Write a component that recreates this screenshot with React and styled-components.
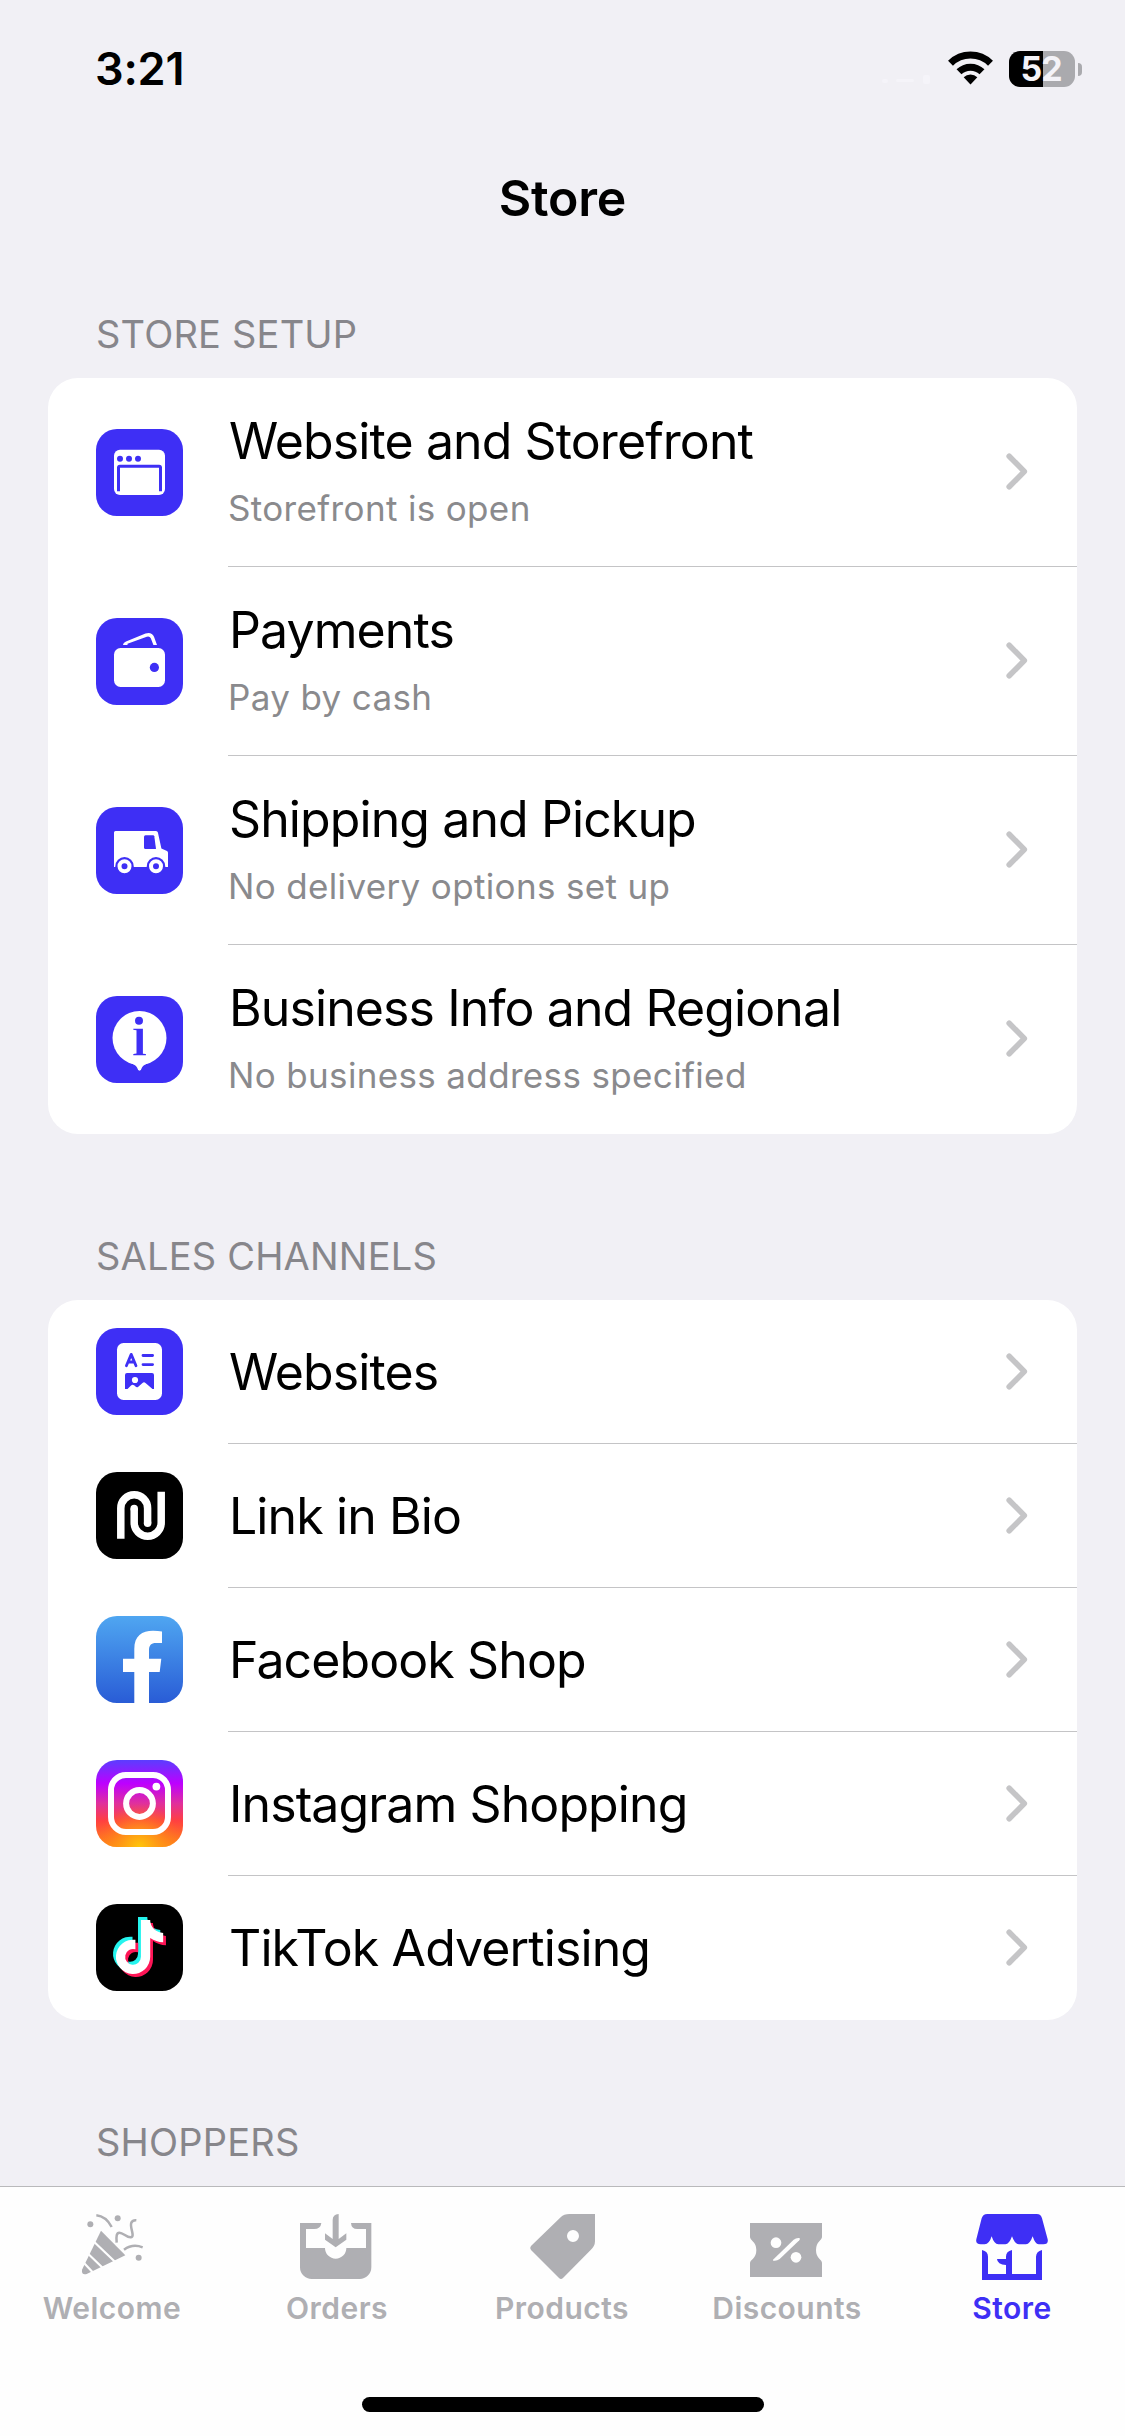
import React from 'react';
import styled, { createGlobalStyle } from 'styled-components';

const GlobalStyle = createGlobalStyle`
    * {
        box-sizing: border-box;
    }
    body {
        margin: 0;
        background: #f1f0f5;
    }
    h1, h2, p {
        margin: 0;
        font-weight: 400;
    }
`;
const StyledScreen = styled.div`
    background: #f1f0f5;
    color: #000;
    display: flex;
    flex-direction: column;
    font-family: Inter, "Liberation Sans", sans-serif;
    height: 2436px;
    overflow: hidden;
    white-space: nowrap;
    width: 1125px;
`;
const StyledStatusBar = styled.div`
    display: flex;
    flex: none;
    justify-content: space-between;
    align-items: center;
    height: 132px;
    padding: 6px 43px 0 95px;
`;
const StyledTime = styled.span`
    font-size: 45px;
    font-weight: 600;
    letter-spacing: -0.2px;
    line-height: 50px;
`;
const StyledIndicators = styled.div`
    display: flex;
    align-items: center;
`;
const StyledSignal = styled.svg`
    height: 12px;
    margin: 22px 18px 0 0;
    width: 50px;
`;
const StyledWifi = styled.svg`
    height: 34px;
    margin: 0 16px 2px 0;
    width: 45px;
`;
const StyledBattery = styled.div`
    background: linear-gradient(to right, #000 34px, #aaaaae 34px);
    border-radius: 11px;
    color: #f4f3f8;
    display: flex;
    justify-content: center;
    align-items: center;
    font-size: 34px;
    font-weight: 700;
    height: 36px;
    letter-spacing: -1px;
    line-height: 36px;
    padding-right: 2px;
    width: 66px;
`;
const StyledBatteryTip = styled.div`
    background: #aaaaae;
    border-radius: 0 6px 6px 0;
    height: 13px;
    margin-left: 3px;
    width: 4px;
`;
const StyledHeader = styled.header`
    display: flex;
    flex: none;
    justify-content: center;
    align-items: center;
    height: 132px;
`;
const StyledTitle = styled.h1`
    font-size: 50px;
    font-weight: 600;
    letter-spacing: -0.2px;
    line-height: 60px;
`;
const StyledContent = styled.main`
    display: flex;
    flex: 1;
    flex-direction: column;
    gap: 99px;
    min-height: 0;
    overflow: hidden;
    padding: 47px 48px 0;
`;
const StyledSectionTitle = styled.h2`
    color: #87868b;
    font-size: 38px;
    letter-spacing: 0.2px;
    line-height: 46px;
    margin: 0 0 21px 48px;
`;
const StyledCard = styled.div`
    background: #fff;
    border-radius: 30px;
    overflow: hidden;
`;
const StyledRow = styled.div`
    display: flex;
    align-items: center;
    height: ${props => (props.$tall ? '189px' : '144px')};
    padding-left: 48px;
`;
const StyledTile = styled.svg`
    border-radius: 21px;
    flex: none;
    height: 87px;
    margin-right: 45px;
    width: 87px;

    ${StyledRow}:not(:has(p + p)) & {
        margin-bottom: 1px;
    }
`;
const StyledRowBody = styled.div`
    border-bottom: 1px solid #c4c4c6;
    display: flex;
    flex: 1;
    justify-content: space-between;
    align-items: center;
    height: 100%;
    padding: 0 49px 1px 0;

    ${StyledRow}:last-child & {
        border-bottom-color: transparent;
    }
`;
const StyledRowText = styled.div`
    padding: ${props => (props.$tall ? '0 0 2px' : '2px 0 0')};
`;
const StyledRowTitle = styled.p`
    font-size: 50px;
    letter-spacing: -0.9px;
    line-height: 60px;
    padding-left: 1px;
`;
const StyledRowNote = styled.p`
    color: #8a8a8d;
    font-size: 35px;
    letter-spacing: 0.35px;
    line-height: 44px;
    margin-top: 15px;
`;
const StyledChevron = styled.svg`
    flex: none;
    height: 37px;
    width: 22px;
`;
const StyledTabBar = styled.nav`
    background: #fefefe;
    border-top: 1px solid #b9b9bb;
    display: flex;
    flex: none;
    flex-direction: column;
    justify-content: space-between;
    align-items: center;
    height: 250px;
    padding: 21px 0 24px;
`;
const StyledTabs = styled.div`
    display: flex;
    width: 100%;
`;
const StyledTab = styled.div`
    color: ${props => (props.$active ? '#3e2ff5' : '#afafb3')};
    display: flex;
    flex: 1;
    flex-direction: column;
    align-items: center;
    line-height: 40px;

    svg {
        height: 72px;
        margin-bottom: 8px;
        width: 75px;
    }
`;
const StyledTabLabel = styled.span`
    font-size: 30px;
    font-weight: 600;
    letter-spacing: 0.45px;
    margin-right: 1px;
`;
const StyledHomeIndicator = styled.div`
    background: #000;
    border-radius: 8px;
    height: 15px;
    width: 402px;
`;

const BLUE = '#3e2ff5';

const Tile = ({ color = BLUE, children }) => (
    <StyledTile viewBox="0 0 87 87">
        <rect width="87" height="87" fill={color} />
        {children}
    </StyledTile>
);

const WebsiteIcon = () => (
    <Tile>
        <rect x="18" y="20.7" width="51" height="45.3" rx="6" fill="#fff" />
        <g fill={BLUE}>
            <circle cx="24" cy="29.7" r="3" />
            <circle cx="33" cy="29.7" r="3" />
            <circle cx="42" cy="29.7" r="3" />
        </g>
        <path d="M22.5 62.3V38.6q0-1.4 1.4-1.4h39.2q1.4 0 1.4 1.4v23.7" fill="none" stroke={BLUE} strokeWidth="3" />
    </Tile>
);
const PaymentsIcon = () => (
    <Tile>
        <path d="M27 27q0-2.5 3-3.6L49.5 15.6q6-2 8.5 3.2L61 27h-3.6l-2.6-6.7q-1.3-2.6-4-1.6L31.5 25.8V27z" fill="#fff" />
        <rect x="18" y="30" width="51" height="39" rx="6.5" fill="#fff" />
        <circle cx="58.4" cy="49.4" r="4.6" fill={BLUE} />
    </Tile>
);
const ShippingIcon = () => (
    <Tile>
        <path d="M18 25.5q0-1.5 1.5-1.5H60q1.5 0 1.9 1.5L65.4 41.5l5.6 2.6q1 .5 1 1.6V60H18z" fill="#fff" />
        <path d="M49.5 28.3h7.6q1 0 1.2 1L60 42H49.5q-1.5 0-1.5-1.5V29.8q0-1.5 1.5-1.5z" fill={BLUE} />
        <circle cx="28.5" cy="59.2" r="9.2" fill={BLUE} />
        <circle cx="60" cy="59.2" r="9.2" fill={BLUE} />
        <circle cx="28.5" cy="59.2" r="5" fill={BLUE} stroke="#fff" strokeWidth="4" />
        <circle cx="60" cy="59.2" r="5" fill={BLUE} stroke="#fff" strokeWidth="4" />
    </Tile>
);
const InfoIcon = () => (
    <Tile>
        <circle cx="43.5" cy="42" r="27" fill="#fff" />
        <path d="M33 66.5Q39.5 68.5 41 71.5Q42 74.7 43.5 74.7T46 71.5Q47.5 68.5 54 66.5z" fill="#fff" />
        <circle cx="43" cy="24.7" r="4" fill={BLUE} />
        <path d="M37.3 32.8h9.6v25l3 .3v1.1H37.3v-1.1l3.2-.5V34.2l-3.2-.4z" fill={BLUE} />
    </Tile>
);
const WebsitesIcon = () => (
    <Tile>
        <rect x="21" y="15" width="45" height="57" rx="6.5" fill="#fff" />
        <g fill="none" stroke={BLUE} strokeWidth="2.8" strokeLinecap="round" strokeLinejoin="round">
            <path d="M30.4 37.7L35.2 26.4L40 37.7M32.3 34h5.8" />
            <path d="M47 27.5h9.6M47 36.6h9.6" />
        </g>
        <path d="M31 45h25q2 0 2 2v14h-1.5L49.5 55q-1.5-1.5-3 0L42 59q-1.5.8-3-1l-1-.8q-1.5-1-3 .3L31.5 61H29V47q0-2 2-2z" fill={BLUE} />
        <circle cx="39" cy="52" r="3.1" fill="#fff" />
    </Tile>
);
const LinkIcon = () => (
    <Tile color="#000">
        <g fill="none" stroke="#fff" strokeWidth="7.5">
            <path d="M24.8 66.8V36.2a13.4 13.4 0 0 1 26.8 0V51.3" />
            <path d="M38.2 36.4V50.7a13.5 13.5 0 0 0 27 0V19.7" />
        </g>
        <circle cx="51.6" cy="51.2" r="3.75" fill="#fff" />
        <circle cx="38.2" cy="36.5" r="3.75" fill="#fff" />
    </Tile>
);
const FacebookIcon = () => (
    <Tile color="url(#facebook)">
        <linearGradient id="facebook" x1="0" y1="0" x2="0" y2="1">
            <stop offset="0" stopColor="#4fa6f1" />
            <stop offset="1" stopColor="#295cd6" />
        </linearGradient>
        <path d="M38.3 87V56H27V42.7h11.3V33C38.3 20 46 14.8 57 14.8q5 0 9 .7v11.4h-6C55 26.9 53 29.5 53 34v8.7h12.3L63.7 56H53v31z" fill="#fff" />
    </Tile>
);
const InstagramIcon = () => (
    <Tile color="url(#instagram)">
        <linearGradient id="instagram" x1="0" y1="0" x2="0" y2="1">
            <stop offset="0" stopColor="#5b3dff" />
            <stop offset=".27" stopColor="#bd00ff" />
            <stop offset=".5" stopColor="#e0309c" />
            <stop offset=".7" stopColor="#ff4040" />
            <stop offset="1" stopColor="#ff8c14" />
        </linearGradient>
        <radialGradient id="glow" cx=".5" cy="1" r=".5">
            <stop offset="0" stopColor="#ffc60a" />
            <stop offset=".3" stopColor="#ffae10" stopOpacity=".8" />
            <stop offset="1" stopColor="#ff7a1a" stopOpacity="0" />
        </radialGradient>
        <rect width="87" height="87" fill="url(#glow)" />
        <g fill="none" stroke="#fff" strokeWidth="6">
            <rect x="15" y="15" width="57" height="57" rx="15" />
            <circle cx="43.5" cy="43.5" r="13.4" />
        </g>
        <circle cx="60.4" cy="26.6" r="3.9" fill="#fff" />
    </Tile>
);

const NOTE = 'M448 209.91a210.06 210.06 0 0 1-122.77-39.25V349.38A162.55 162.55 0 1 1 185 188.31V278.2a74.62 74.62 0 1 0 52.23 71.18V0h88a121.18 121.18 0 0 0 1.86 22.17A122.18 122.18 0 0 0 381 102.39a121.43 121.43 0 0 0 67 20.14z';

const TikTokIcon = () => (
    <Tile color="#000">
        <path d={NOTE} fill="#25f4ee" transform="translate(17 13) scale(.1055)" />
        <path d={NOTE} fill="#fe1556" transform="translate(22.7 19) scale(.1055)" />
        <path d={NOTE} fill="#fff" transform="translate(19.9 16) scale(.1055)" />
    </Tile>
);

const WelcomeIcon = () => (
    <svg viewBox="15 24 225 216" fill="currentColor">
        <path d="M93 92L166 166L50 222Q34 226 36 209z" />
        <g fill="none" stroke="#fefefe" strokeWidth="6.5">
            <path d="M72 125L138 188M52 159L104 209M40 187L68 217" />
        </g>
        <g fill="none" stroke="currentColor" strokeWidth="7.5">
            <path d="M79 46Q108 49 125 81" />
            <path d="M140 128C138 108 140 98 148 98C160 98 170 113 182 112C197 110 178 82 184 68Q188 60 199 61" />
            <path d="M162 149Q188 130 218 142" />
        </g>
        <circle cx="61" cy="73" r="9" />
        <circle cx="143" cy="55" r="9" />
        <circle cx="206" cy="173" r="9" />
    </svg>
);
const OrdersIcon = () => (
    <svg viewBox="690 24 225 216" fill="currentColor">
        <path d="M690 69H754Q752 87 732 87H708V144H765A32 32 0 0 0 829 144H888V87H862Q844 87 843 69H904V202a35 35 0 0 1-35 35H725a35 35 0 0 1-35-35z" />
        <path d="M788 60Q788 44 806 42V117L829 100V119L797 142L765 119V100L788 117z" />
    </svg>
);
const ProductsIcon = () => (
    <svg viewBox="15 24 225 216" fill="currentColor">
        <path fillRule="evenodd" d="M225 42H148Q132 42 122 52L33 138Q28 144 33 150L117 234Q123 240 129 234L212 150Q225 138 225 124zM159 90a18 18 0 1 0 0 36a18 18 0 1 0 0-36z" />
    </svg>
);
const DiscountsIcon = () => (
    <svg viewBox="690 24 225 216" fill="currentColor">
        <path d="M690 69H906V112Q905 118 898 124Q888 134 888 150T898 176Q905 182 906 188V231H690V188Q691 182 699 176Q709 166 709 150T698 124Q691 118 690 112z" />
        <g fill="#fefefe">
            <circle cx="768" cy="128" r="16" />
            <circle cx="828" cy="172" r="16" />
            <path d="M759 179L821 119Q828 113 838 114Q842 117 838 121L779 177Q770 184 760 182Q758 181 759 179z" />
        </g>
    </svg>
);
const StoreIcon = () => (
    <svg viewBox="45 24 225 216" fill="currentColor">
        <path d="M82 42H230Q243 42 246 55L263 118Q266 133 250 133H236Q225 132 218 109Q210 132 198 133H177Q164 132 156 109Q148 132 136 133H115Q102 132 95 109Q88 132 74 133H62Q46 132 49 118L65 55Q69 42 82 42z" />
        <path d="M66 150Q84 154 84 170V222H138V195Q112 194 111 177H138V170Q138 154 156 150V222H228V170Q229 154 246 150V240H66z" />
    </svg>
);

const Chevron = () => (
    <StyledChevron viewBox="0 0 22 37">
        <path d="M3.2 3.2L18.3 18.5L3.2 33.8" fill="none" stroke="#c5c5c7" strokeWidth="5.6" strokeLinecap="round" strokeLinejoin="round" />
    </StyledChevron>
);

const Wifi = () => (
    <StyledWifi viewBox="0 0 45 34">
        <g fill="none" stroke="#000" strokeWidth="7">
            <path d="M2.5 12.3A28.5 28.5 0 0 1 42.5 12.3" />
            <path d="M11 20.8A16.5 16.5 0 0 1 34 20.8" />
        </g>
        <path d="M15.7 26.3A9.8 9.8 0 0 1 29.3 26.3L22.5 33.4z" />
    </StyledWifi>
);

const sections = [
    {
        title: 'STORE SETUP',
        rows: [
            { title: 'Website and Storefront', note: 'Storefront is open', Icon: WebsiteIcon },
            { title: 'Payments', note: 'Pay by cash', Icon: PaymentsIcon },
            { title: 'Shipping and Pickup', note: 'No delivery options set up', Icon: ShippingIcon },
            { title: 'Business Info and Regional', note: 'No business address specified', Icon: InfoIcon }
        ]
    },
    {
        title: 'SALES CHANNELS',
        rows: [
            { title: 'Websites', Icon: WebsitesIcon },
            { title: 'Link in Bio', Icon: LinkIcon },
            { title: 'Facebook Shop', Icon: FacebookIcon },
            { title: 'Instagram Shopping', Icon: InstagramIcon },
            { title: 'TikTok Advertising', Icon: TikTokIcon }
        ]
    },
    { title: 'SHOPPERS', rows: [] }
];

const tabs = [
    { label: 'Welcome', Icon: WelcomeIcon },
    { label: 'Orders', Icon: OrdersIcon },
    { label: 'Products', Icon: ProductsIcon },
    { label: 'Discounts', Icon: DiscountsIcon },
    { label: 'Store', Icon: StoreIcon, active: true }
];

const Row = ({ title, note, Icon }) => (
    <StyledRow $tall={Boolean(note)}>
        <Icon />
        <StyledRowBody>
            <StyledRowText $tall={Boolean(note)}>
                <StyledRowTitle>{title}</StyledRowTitle>
                {note && <StyledRowNote>{note}</StyledRowNote>}
            </StyledRowText>
            <Chevron />
        </StyledRowBody>
    </StyledRow>
);

const App = () => (
    <StyledScreen>
        <GlobalStyle />
        <StyledStatusBar>
            <StyledTime>3:21</StyledTime>
            <StyledIndicators>
                <StyledSignal viewBox="0 0 50 12" fill="#f5f4f9">
                    <rect x="2" y="5" width="6" height="4" rx="2" />
                    <rect x="16" y="5" width="18" height="3" rx="1.5" />
                    <rect x="43" y="1" width="7" height="9" rx="2" />
                </StyledSignal>
                <Wifi />
                <StyledBattery>52</StyledBattery>
                <StyledBatteryTip />
            </StyledIndicators>
        </StyledStatusBar>
        <StyledHeader>
            <StyledTitle>Store</StyledTitle>
        </StyledHeader>
        <StyledContent>
            {sections.map(section => (
                <section key={section.title}>
                    <StyledSectionTitle>{section.title}</StyledSectionTitle>
                    <StyledCard>
                        {section.rows.map(row => <Row key={row.title} {...row} />)}
                    </StyledCard>
                </section>
            ))}
        </StyledContent>
        <StyledTabBar>
            <StyledTabs>
                {tabs.map(({ label, Icon, active }) => (
                    <StyledTab key={label} $active={active}>
                        <Icon />
                        <StyledTabLabel>{label}</StyledTabLabel>
                    </StyledTab>
                ))}
            </StyledTabs>
            <StyledHomeIndicator />
        </StyledTabBar>
    </StyledScreen>
);

export default App;
